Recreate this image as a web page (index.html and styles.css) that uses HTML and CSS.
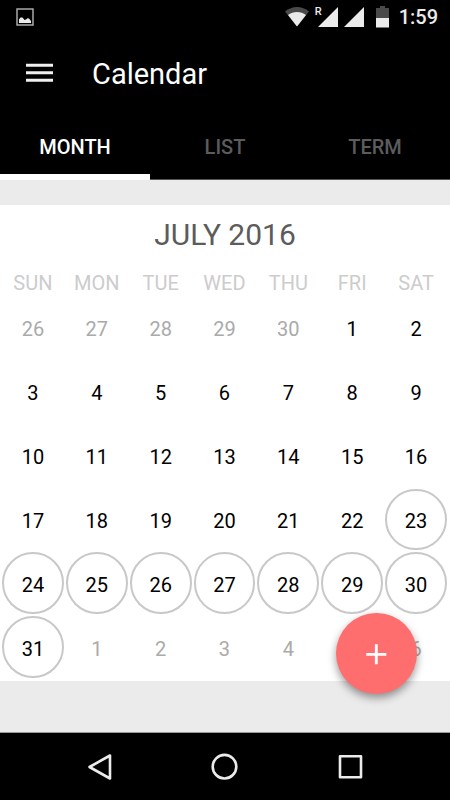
FILE: index.html
```html
<!DOCTYPE html>
<html lang="en">
<head>
    <title>Calendar</title>
    <meta charset="UTF-8">
    <meta name="viewport" content="width=device-width, initial-scale=1">
    <link rel="stylesheet" href="styles.css">
</head>
<body>
    <div class="status-bar">
        <svg class="status-picture" width="18" height="18" viewBox="0 0 18 18">
            <rect x="1" y="1" width="16" height="16" fill="none" stroke="#b4b4b4" stroke-width="1.4"/>
            <path d="M3 15v-3.500l1.500-2h2l2 2.500 1.500-.5 1.500-1.300 1.500.3 2 2.500v2z" fill="#ebebeb"/>
        </svg>
        <div class="status-icons">
            <svg width="24" height="20" viewBox="0 0 24 20">
                <path d="M0 4.500C7-1.500 17-1.500 24 4.500L12 19.500z" fill="#4a4a4a"/>
                <path d="M3 8C8 4 16 4 21 8L12 19.500z" fill="#ebebeb"/>
            </svg>
            <div class="signal">
                <span class="roaming">R</span>
                <svg width="20" height="20" viewBox="0 0 20 20"><path d="M20 0v20H0z" fill="#ebebeb"/></svg>
            </div>
            <svg width="20" height="20" viewBox="0 0 20 20"><path d="M20 0v20H0z" fill="#ebebeb"/></svg>
            <svg class="battery" width="13" height="22" viewBox="0 0 13 22">
                <path d="M0 2h4V0h5v2h4v10H0z" fill="#4a4a4a"/>
                <path d="M0 12h13v9.500H0z" fill="#ebebeb"/>
            </svg>
            <span class="clock">1:59</span>
        </div>
    </div>

    <header class="app-bar">
        <button class="menu-button" type="button" aria-label="Menu">
            <svg width="28" height="22" viewBox="0 0 28 22">
                <path d="M0 2.200h27M0 9.700h27M0 17.200h27" stroke="#f0f0f0" stroke-width="3"/>
            </svg>
        </button>
        <h1>Calendar</h1>
    </header>

    <nav class="tabs">
        <a class="tab active" href="#month">MONTH</a>
        <a class="tab" href="#list">LIST</a>
        <a class="tab" href="#term">TERM</a>
    </nav>

    <main>
        <section class="calendar" id="month">
            <h2>JULY 2016</h2>
            <table>
                <thead>
                    <tr><th>SUN</th><th>MON</th><th>TUE</th><th>WED</th><th>THU</th><th>FRI</th><th>SAT</th></tr>
                </thead>
                <tbody>
                    <tr>
                        <td class="other"><span class="day">26</span></td>
                        <td class="other"><span class="day">27</span></td>
                        <td class="other"><span class="day">28</span></td>
                        <td class="other"><span class="day">29</span></td>
                        <td class="other"><span class="day">30</span></td>
                        <td><span class="day">1</span></td>
                        <td><span class="day">2</span></td>
                    </tr>
                    <tr>
                        <td><span class="day">3</span></td>
                        <td><span class="day">4</span></td>
                        <td><span class="day">5</span></td>
                        <td><span class="day">6</span></td>
                        <td><span class="day">7</span></td>
                        <td><span class="day">8</span></td>
                        <td><span class="day">9</span></td>
                    </tr>
                    <tr>
                        <td><span class="day">10</span></td>
                        <td><span class="day">11</span></td>
                        <td><span class="day">12</span></td>
                        <td><span class="day">13</span></td>
                        <td><span class="day">14</span></td>
                        <td><span class="day">15</span></td>
                        <td><span class="day">16</span></td>
                    </tr>
                    <tr>
                        <td><span class="day">17</span></td>
                        <td><span class="day">18</span></td>
                        <td><span class="day">19</span></td>
                        <td><span class="day">20</span></td>
                        <td><span class="day">21</span></td>
                        <td><span class="day">22</span></td>
                        <td class="marked"><span class="day">23</span></td>
                    </tr>
                    <tr>
                        <td class="marked"><span class="day">24</span></td>
                        <td class="marked"><span class="day">25</span></td>
                        <td class="marked"><span class="day">26</span></td>
                        <td class="marked"><span class="day">27</span></td>
                        <td class="marked"><span class="day">28</span></td>
                        <td class="marked"><span class="day">29</span></td>
                        <td class="marked"><span class="day">30</span></td>
                    </tr>
                    <tr>
                        <td class="marked"><span class="day">31</span></td>
                        <td class="other"><span class="day">1</span></td>
                        <td class="other"><span class="day">2</span></td>
                        <td class="other"><span class="day">3</span></td>
                        <td class="other"><span class="day">4</span></td>
                        <td class="other"><span class="day">5</span></td>
                        <td class="other"><span class="day">6</span></td>
                    </tr>
                </tbody>
            </table>
        </section>
        <button class="fab" type="button" aria-label="Add event">
            <svg width="22" height="22" viewBox="0 0 22 22">
                <path d="M10.300 1.300v20M.3 11.300h20" stroke="#fff" stroke-width="2.800"/>
            </svg>
        </button>
    </main>

    <footer class="nav-bar">
        <button type="button" aria-label="Back">
            <svg width="28" height="28" viewBox="0 0 28 28">
                <path d="M25 2.500v23L4.500 14z"/>
            </svg>
        </button>
        <button type="button" aria-label="Home">
            <svg width="28" height="28" viewBox="0 0 28 28">
                <circle cx="13.500" cy="13.700" r="11.800"/>
            </svg>
        </button>
        <button type="button" aria-label="Recent apps">
            <svg width="28" height="28" viewBox="0 0 28 28">
                <rect x="3" y="3.200" width="21" height="21"/>
            </svg>
        </button>
    </footer>
</body>
</html>
```
FILE: styles.css
```css
:root {
    --accent: #ff6e6e;
    --page: #ebebeb;
    --icon: #ebebeb;
    --ring: #c8c8c8;
}

* {
    box-sizing: border-box;
}

body {
    display: flex;
    flex-direction: column;
    min-height: 100vh;
    margin: 0;
    background-color: #000;
    font-family: Roboto, "Liberation Sans", sans-serif;
}

svg {
    display: block;
}

button {
    display: flex;
    align-items: center;
    justify-content: center;
    padding: 0;
    border: none;
    background: none;
    cursor: pointer;
}

.status-bar {
    display: flex;
    align-items: center;
    justify-content: space-between;
    height: 34px;
    padding: 0 12px 0 16px;
}

.status-icons {
    display: flex;
    align-items: center;
    gap: 6px;
}

.signal {
    position: relative;
    padding-left: 3px;
}

.roaming {
    position: absolute;
    top: 0;
    left: 0;
    color: var(--icon);
    font-size: 11px;
    font-weight: 500;
    line-height: 10px;
}

.battery {
    margin: 0 4px 0 6px;
}

.clock {
    color: var(--icon);
    font-size: 20px;
    font-weight: 500;
    line-height: 24px;
}

.app-bar {
    display: flex;
    align-items: center;
    height: 80px;
    padding: 0 26px;
    gap: 38px;
}

h1 {
    margin: 0;
    color: #fff;
    font-size: 29px;
    font-weight: 400;
    line-height: 34px;
}

.tabs {
    display: flex;
    height: 66px;
    border-bottom: 1px solid #555;
}

.tab {
    flex: 1;
    height: 66px;
    padding-top: 6px;
    border-bottom: 6px solid transparent;
    color: #5c5c5c;
    font-size: 20px;
    font-weight: 500;
    line-height: 54px;
    text-align: center;
    text-decoration: none;
}

.tab.active {
    border-bottom-color: #fff;
    color: #fff;
}

main {
    position: relative;
    flex: 1;
    padding: 25px 0 51px;
    background-color: var(--page);
}

.calendar {
    padding: 12px 0 2px;
    background-color: #fff;
}

h2 {
    margin: 0 0 12px;
    color: #5c5c5c;
    font-size: 30px;
    font-weight: 400;
    line-height: 36px;
    text-align: center;
}

table,
thead,
tbody {
    display: block;
}

table {
    padding: 0 2px 0 1px;
}

tr {
    display: grid;
    grid-template-columns: repeat(7, 1fr);
}

th {
    padding: 6px 0 0;
    color: #ccc;
    font-size: 20px;
    font-weight: 400;
    line-height: 25px;
}

td {
    padding: 1px;
    color: #000;
    font-size: 20px;
}

.day {
    display: flex;
    align-items: center;
    justify-content: center;
    aspect-ratio: 1;
    padding-top: 3px;
    border: 2px solid transparent;
    border-radius: 50%;
}

.marked .day {
    border-color: var(--ring);
}

.other {
    color: #aaa;
}

.fab {
    position: absolute;
    right: 33px;
    bottom: 38px;
    width: 81px;
    height: 81px;
    border-radius: 50%;
    background-color: var(--accent);
    box-shadow: 0 4px 8px rgba(0, 0, 0, 0.4);
}

.nav-bar {
    display: flex;
    justify-content: center;
    height: 68px;
    border-top: 1px solid #999;
}

.nav-bar button {
    width: 28%;
}

.nav-bar svg {
    fill: none;
    stroke: var(--icon);
    stroke-width: 2.6px;
    stroke-linejoin: round;
}
```
